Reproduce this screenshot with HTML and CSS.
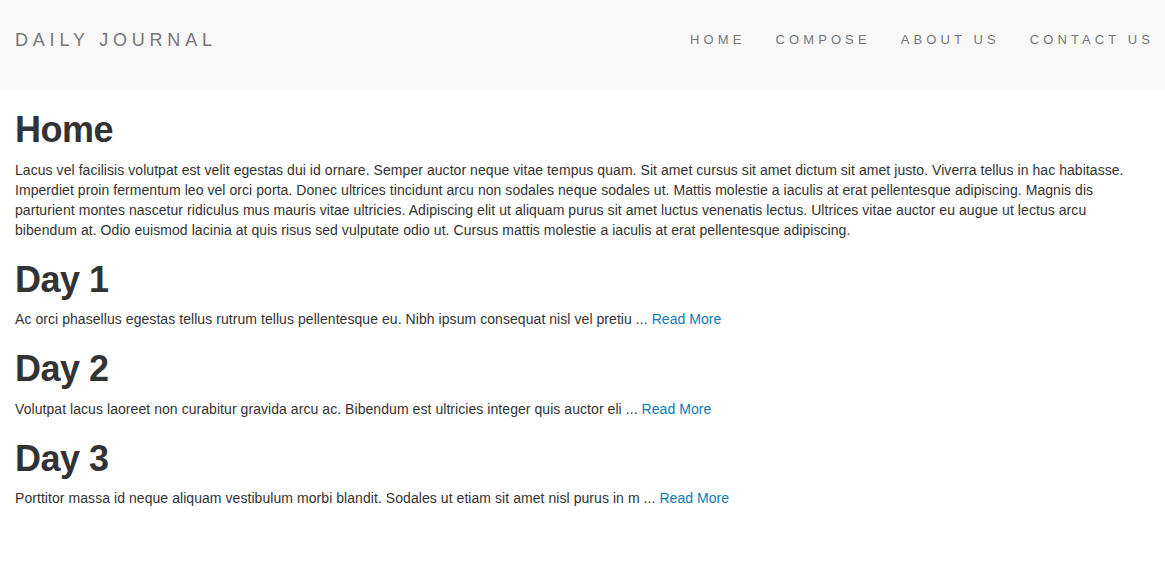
FILE: index.html
```html
<!DOCTYPE html>
<html lang="en">
<head>
<meta charset="utf-8">
<title>Daily Journal</title>
<link rel="stylesheet" href="styles.css">
</head>
<body>
<header class="navbar">
  <a class="brand" href="#">DAILY JOURNAL</a>
  <nav class="nav">
    <a class="nav-link" href="#">HOME</a>
    <a class="nav-link" href="#">COMPOSE</a>
    <a class="nav-link" href="#">ABOUT US</a>
    <a class="nav-link" href="#">CONTACT US</a>
  </nav>
</header>
<main class="content">
  <h1 class="title">Home</h1>
  <p class="text">Lacus vel facilisis volutpat est velit egestas dui id ornare. Semper auctor neque vitae tempus quam. Sit amet cursus sit amet dictum sit amet justo. Viverra tellus in hac habitasse. Imperdiet proin fermentum leo vel orci porta. Donec ultrices tincidunt arcu non sodales neque sodales ut. Mattis molestie a iaculis at erat pellentesque adipiscing. Magnis dis parturient montes nascetur ridiculus mus mauris vitae ultricies. Adipiscing elit ut aliquam purus sit amet luctus venenatis lectus. Ultrices vitae auctor eu augue ut lectus arcu bibendum at. Odio euismod lacinia at quis risus sed vulputate odio ut. Cursus mattis molestie a iaculis at erat pellentesque adipiscing.</p>

  <h1 class="title">Day 1</h1>
  <p class="text">Ac orci phasellus egestas tellus rutrum tellus pellentesque eu. Nibh ipsum consequat nisl vel pretiu ... <a class="more" href="#">Read More</a></p>

  <h1 class="title">Day 2</h1>
  <p class="text">Volutpat lacus laoreet non curabitur gravida arcu ac. Bibendum est ultricies integer quis auctor eli ... <a class="more" href="#">Read More</a></p>

  <h1 class="title">Day 3</h1>
  <p class="text">Porttitor massa id neque aliquam vestibulum morbi blandit. Sodales ut etiam sit amet nisl purus in m ... <a class="more" href="#">Read More</a></p>
</main>
</body>
</html>
```
FILE: styles.css
```css
html, body {
  margin: 0;
  padding: 0;
}
body {
  font-family: "Liberation Sans", Arial, sans-serif;
  font-size: 14px;
  line-height: 20px;
  color: #333333;
  background: #ffffff;
}
.navbar {
  height: 90px;
  box-sizing: border-box;
  background: #f8f8f8;
  display: flex;
  justify-content: space-between;
  align-items: flex-start;
  padding: 30px 11px 0 15px;
  margin-bottom: 20px;
}
.brand {
  font-size: 18px;
  line-height: 20px;
  letter-spacing: 4.8px;
  color: #777777;
  text-decoration: none;
}
.nav {
  display: flex;
}
.nav-link {
  font-size: 13px;
  line-height: 20px;
  letter-spacing: 4.1px;
  color: #777777;
  text-decoration: none;
  padding: 0 15px;
}
.nav-link:last-child {
  padding-right: 0;
}
.content {
  padding: 0 15px;
}
.title {
  font-size: 36px;
  line-height: 39.6px;
  font-weight: 700;
  letter-spacing: -0.5px;
  margin: 20px 0 10px;
  color: #333333;
}
.content > .title:first-child {
  margin-top: 0;
}
.text {
  margin: 0 0 10px;
  letter-spacing: 0.06px;
}
.more {
  color: #0b7bb8;
  text-decoration: none;
}
```
